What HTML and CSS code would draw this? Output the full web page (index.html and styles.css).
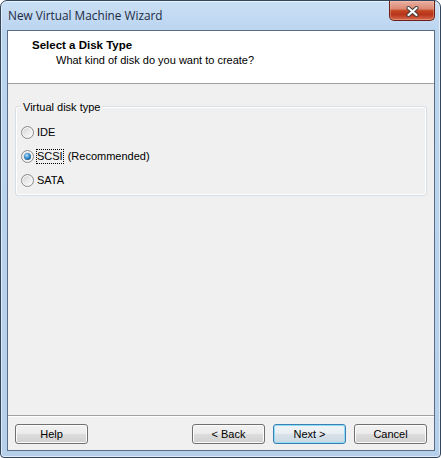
FILE: index.html
```html
<!DOCTYPE html>
<html>
<head>
<meta charset="utf-8">
<link rel="stylesheet" href="styles.css">
</head>
<body>
<div class="window">
  <div class="titlebar">
    <span class="title">New Virtual Machine Wizard</span>
    <div class="close">
      <svg width="13" height="11" viewBox="0 0 13 11">
        <path d="M2.5 2 L10.5 9 M10.5 2 L2.5 9" stroke="#3b3b3b" stroke-width="4" stroke-linecap="round"/>
        <path d="M2.5 2 L10.5 9 M10.5 2 L2.5 9" stroke="#ffffff" stroke-width="2.2" stroke-linecap="round"/>
      </svg>
    </div>
  </div>
  <div class="client">
    <div class="header">
      <div class="h-title">Select a Disk Type</div>
      <div class="h-sub">What kind of disk do you want to create?</div>
    </div>
    <div class="body">
      <div class="group">
        <div class="legend">Virtual disk type</div>
        <div class="options">
          <div class="opt"><span class="radio"></span><span class="lbl">IDE</span></div>
          <div class="opt"><span class="radio checked"></span><span class="lbl focus">SCSI</span><span class="rec">(Recommended)</span></div>
          <div class="opt"><span class="radio"></span><span class="lbl">SATA</span></div>
        </div>
      </div>
    </div>
    <div class="sep"></div>
    <div class="footer">
      <button class="btn help">Help</button>
      <button class="btn">&lt; Back</button>
      <button class="btn default">Next &gt;</button>
      <button class="btn">Cancel</button>
    </div>
  </div>
</div>
</body>
</html>
```
FILE: styles.css
```css
html, body {
  margin: 0;
  padding: 0;
}
body {
  width: 441px;
  height: 458px;
  overflow: hidden;
  background: #ffffff;
}
.window {
  box-sizing: border-box;
  width: 441px;
  height: 458px;
  border: 1px solid #34465c;
  border-radius: 7px 7px 4px 4px;
  background: linear-gradient(180deg, #c9dff5 0, #bcd5ef 30px, #b6d0ec 100%);
  box-shadow: inset 0 0 0 1px rgba(255, 255, 255, 0.55);
  display: flex;
  flex-direction: column;
  padding: 0 5px 6px 6px;
  font-family: "Liberation Sans", Arial, sans-serif;
  font-size: 11px;
  color: #000;
}
.titlebar {
  height: 29px;
  display: flex;
  align-items: flex-start;
}
.title {
  font-family: "Open Sans", "Noto Sans", sans-serif;
  font-size: 11.8px;
  line-height: 15px;
  padding-top: 7px;
  margin-left: 1px;
  color: #1b2a42;
}
.close {
  margin-left: auto;
  width: 46px;
  height: 20px;
  box-sizing: border-box;
  border: 1px solid #6a2216;
  border-top: none;
  border-radius: 0 0 5px 5px;
  background: linear-gradient(180deg, #eab0a2 0, #db8a74 40%, #c4431f 52%, #b7351a 72%, #d86a4f 100%);
  box-shadow: inset 0 0 0 1px rgba(255, 200, 190, 0.35);
  display: flex;
  align-items: center;
  justify-content: center;
}
.close svg {
  display: block;
  margin-top: 1px;
}
.client {
  flex: 1;
  display: flex;
  flex-direction: column;
  border: 1px solid #5b6d84;
  background: #f0f0f0;
}
.header {
  box-sizing: border-box;
  height: 53px;
  background: #ffffff;
  border-bottom: 1px solid #a0a0a0;
  padding-top: 7px;
}
.h-title {
  font-weight: bold;
  font-size: 11.5px;
  line-height: 15px;
  padding-left: 24px;
}
.h-sub {
  line-height: 15px;
  padding-left: 48px;
}
.body {
  flex: 1;
  padding: 22px 7px 0;
}
.group {
  box-sizing: border-box;
  height: 90px;
  border: 1px solid #d5dfe5;
  border-radius: 3px;
  box-shadow: inset 0 0 0 1px #ffffff;
  padding: 0 0 0 5px;
}
.legend {
  width: fit-content;
  margin-top: -6px;
  padding: 0 2px;
  line-height: 13px;
  background: #f0f0f0;
}
.options {
  margin-top: 6px;
  display: flex;
  flex-direction: column;
}
.opt {
  height: 24px;
  display: flex;
  align-items: center;
}
.radio {
  box-sizing: border-box;
  width: 13px;
  height: 13px;
  border-radius: 50%;
  border: 1px solid #8b8b8b;
  background: linear-gradient(135deg, #cfcfcf 0%, #e8e8e8 45%, #fdfdfd 100%);
  box-shadow: inset 0 0 0 1px #f6f6f6;
  margin-right: 3px;
  display: flex;
  align-items: center;
  justify-content: center;
}
.radio.checked::after {
  content: "";
  width: 7px;
  height: 7px;
  border-radius: 50%;
  background: radial-gradient(circle at 40% 35%, #bfe6fb 0, #4b9bd6 35%, #1a5c93 75%, #0f3f68 100%);
}
.lbl {
  line-height: 15px;
}
.focus {
  display: inline-block;
  height: 15px;
  padding: 0 1px;
  margin-left: -1px;
  outline: 1px dotted #000;
  outline-offset: -1px;
}
.rec {
  margin-left: 4px;
  line-height: 15px;
}
.sep {
  border-top: 1px solid #a0a0a0;
  border-bottom: 1px solid #ffffff;
}
.footer {
  display: flex;
  gap: 8px;
  padding: 7px 7px 6px;
}
.btn {
  box-sizing: border-box;
  width: 73px;
  height: 20px;
  padding: 0;
  border: 1px solid #707070;
  border-radius: 3px;
  background: linear-gradient(180deg, #f2f2f2 0%, #ebebeb 48%, #dddddd 52%, #cfcfcf 100%);
  box-shadow: inset 0 0 0 1px #fcfcfc;
  font-family: "Liberation Sans", Arial, sans-serif;
  font-size: 11px;
  color: #000;
  line-height: 16px;
}
.help {
  margin-right: auto;
}
.default {
  border-color: #3c7fb1;
  background: linear-gradient(180deg, #f0f4f7 0%, #e8eef2 48%, #d8e2ea 52%, #cbd9e4 100%);
  box-shadow: inset 0 0 0 1px #8fdcf8;
}
```
